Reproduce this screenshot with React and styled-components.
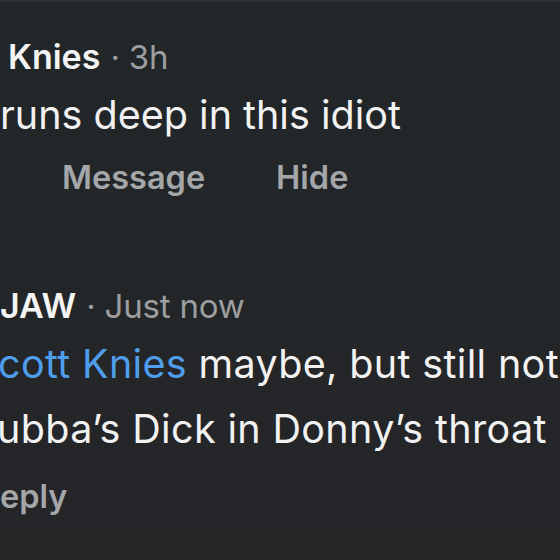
import styled, { createGlobalStyle } from "styled-components";

const GlobalStyle = createGlobalStyle`
  html, body {
    margin: 0;
    padding: 0;
    background: #232629;
  }
`;

const Page = styled.main`
  width: 560px;
  height: 560px;
  overflow: hidden;
  box-sizing: border-box;
  border-top: 2px solid #2c3032;
  background: linear-gradient(180deg, #212628 0%, #232628 50%, #252528 100%);
  font-family: Inter, "Noto Sans", sans-serif;
  color: #f2f2f2;
  display: flex;
  flex-direction: column;
  padding-top: 29px;
`;

const Comment = styled.section`
  display: flex;
  flex-direction: column;
  white-space: nowrap;
  margin-top: ${(p) => p.$top || 0}px;
`;

const Header = styled.div`
  display: flex;
  align-items: baseline;
  height: 52px;
  line-height: 52px;
  font-size: 34px;
  padding-left: ${(p) => p.$indent || 0}px;
`;

const Name = styled.span`
  font-weight: 600;
  color: #f4f4f4;
`;

const Meta = styled.span`
  font-weight: 400;
  font-size: 33px;
  letter-spacing: -0.2px;
  color: #9c9ea0;
  margin-left: 10px;
`;

const Body = styled.p`
  margin: 0;
  font-size: 39.5px;
  line-height: 65px;
  color: #f2f2f2;
  letter-spacing: ${(p) => p.$spacing || 0}px;
`;

const Line = styled.span`
  display: block;
  margin-left: ${(p) => p.$indent || 0}px;
`;

const Mention = styled.span`
  color: #4f9eec;
`;

const Actions = styled.div`
  display: flex;
  gap: 71px;
  height: 56px;
  line-height: 56px;
  font-size: 32.5px;
  font-weight: 600;
  color: #a4a6a8;
  margin-top: ${(p) => p.$top || 0}px;
  padding-left: ${(p) => p.$indent || 0}px;
`;

const Action = styled.span``;

export default function App() {
  return (
    <>
      <GlobalStyle />
      <Page>
        <Comment>
          <Header $indent={8}>
            <Name>Knies</Name>
            <Meta>· 3h</Meta>
          </Header>
          <Body>
            <Line $indent={0}>runs deep in this idiot</Line>
          </Body>
          <Actions $top={2} $indent={62}>
            <Action>Message</Action>
            <Action>Hide</Action>
          </Actions>
        </Comment>

        <Comment $top={74}>
          <Header $indent={0}>
            <Name>JAW</Name>
            <Meta>· Just now</Meta>
          </Header>
          <Body $spacing={0.35}>
            <Line $indent={-2}>
              <Mention>cott Knies</Mention> maybe, but still not
            </Line>
            <Line $indent={-3}>ubba’s Dick in Donny’s throat</Line>
          </Body>
          <Actions $top={7} $indent={-4}>
            <Action>eply</Action>
          </Actions>
        </Comment>
      </Page>
    </>
  );
}
